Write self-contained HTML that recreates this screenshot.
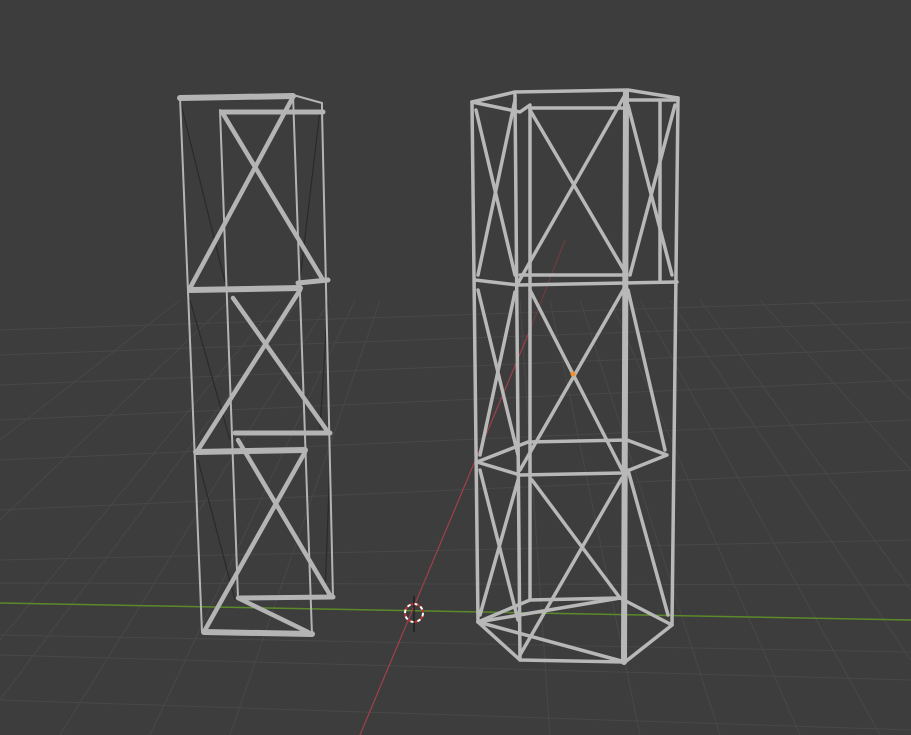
<!DOCTYPE html>
<html><head><style>html,body{margin:0;padding:0;background:#3d3d3d;width:911px;height:735px;overflow:hidden}</style></head>
<body>
<svg width="911" height="735" viewBox="0 0 911 735" xmlns="http://www.w3.org/2000/svg">
<rect width="911" height="735" fill="#3d3d3d"/>
<g stroke="#484848" stroke-width="1" fill="none">
<line x1="0" y1="330" x2="911" y2="300"/>
<line x1="0" y1="355" x2="911" y2="322"/>
<line x1="0" y1="385" x2="911" y2="348"/>
<line x1="0" y1="420" x2="911" y2="380"/>
<line x1="0" y1="460" x2="911" y2="420"/>
<line x1="0" y1="510" x2="911" y2="470"/>
<line x1="0" y1="560" x2="911" y2="540"/>
<line x1="0" y1="583" x2="911" y2="585"/>
<line x1="0" y1="635" x2="911" y2="652"/>
<line x1="0" y1="655" x2="911" y2="680"/>
<line x1="0" y1="700" x2="911" y2="730"/>
<line x1="60" y1="735" x2="330" y2="300"/>
<line x1="150" y1="735" x2="355" y2="300"/>
<line x1="230" y1="735" x2="380" y2="300"/>
<line x1="0" y1="700" x2="300" y2="300"/>
<line x1="0" y1="640" x2="280" y2="300"/>
<line x1="0" y1="520" x2="230" y2="300"/>
<line x1="0" y1="440" x2="180" y2="300"/>
<line x1="550" y1="735" x2="520" y2="300"/>
<line x1="640" y1="735" x2="550" y2="300"/>
<line x1="720" y1="735" x2="580" y2="300"/>
<line x1="800" y1="735" x2="610" y2="300"/>
<line x1="880" y1="735" x2="640" y2="300"/>
<line x1="911" y1="660" x2="670" y2="300"/>
<line x1="911" y1="590" x2="700" y2="300"/>
<line x1="911" y1="470" x2="760" y2="300"/>
<line x1="911" y1="400" x2="810" y2="300"/>
</g>
<line x1="0" y1="603" x2="911" y2="620" stroke="#5b8a2a" stroke-width="1.5"/>
<line x1="360" y1="735" x2="530" y2="330" stroke="#a0404a" stroke-width="1.2"/>
<line x1="530" y1="330" x2="565" y2="240" stroke="#7a3a40" stroke-width="1"/>
<circle cx="414" cy="613" r="9" fill="none" stroke="#fff" stroke-width="2" stroke-dasharray="4 3"/>
<circle cx="414" cy="613" r="9" fill="none" stroke="#c0302f" stroke-width="2" stroke-dasharray="3 4" stroke-dashoffset="3.5"/>
<line x1="414" y1="596" x2="414" y2="632" stroke="#111" stroke-width="1"/>
<g stroke="#2a2a2a" stroke-width="1.2" fill="none">
<line x1="180" y1="100" x2="225" y2="282"/><line x1="320" y1="110" x2="300" y2="280"/>
<line x1="190" y1="300" x2="230" y2="440"/><line x1="328" y1="300" x2="320" y2="430"/>
<line x1="198" y1="460" x2="235" y2="600"/><line x1="330" y1="460" x2="325" y2="595"/>
</g>
<g stroke="#b4b4b4" stroke-linecap="round" fill="none">
<g stroke-width="2">
<line x1="180" y1="97" x2="202" y2="632"/>
<line x1="293" y1="95" x2="312" y2="635"/>
<line x1="220" y1="110" x2="238" y2="598"/>
<line x1="322" y1="110" x2="333" y2="598"/>
<line x1="293" y1="95" x2="322" y2="103"/>
<line x1="322" y1="103" x2="322" y2="112"/>
</g>
<g stroke-width="5">
<line x1="222" y1="112" x2="323" y2="112"/>
<line x1="298" y1="283" x2="328" y2="280"/>
<line x1="235" y1="433" x2="330" y2="433"/>
<line x1="240" y1="598" x2="333" y2="597"/>
</g>
<g stroke-width="6">
<line x1="180" y1="98" x2="293" y2="96"/>
<line x1="190" y1="290" x2="300" y2="288"/>
<line x1="196" y1="452" x2="305" y2="450"/>
<line x1="204" y1="632" x2="312" y2="634"/>
</g>
<g stroke-width="4.5">
<line x1="190" y1="288" x2="293" y2="97"/>
<line x1="222" y1="112" x2="323" y2="280"/>
<line x1="198" y1="450" x2="300" y2="290"/>
<line x1="233" y1="298" x2="328" y2="432"/>
<line x1="205" y1="630" x2="305" y2="452"/>
<line x1="238" y1="440" x2="330" y2="595"/>
<line x1="238" y1="598" x2="308" y2="632"/>
</g>
</g>
<g stroke="#b8b8b8" stroke-linecap="round" stroke-linejoin="round" fill="none">
<g stroke-width="3.5">
<polyline points="472,102 515,92 628,90 678,98"/>
<polyline points="472,102 520,112 530,105"/>
<line x1="530" y1="108" x2="625" y2="108"/>
<line x1="625" y1="100" x2="678" y2="100"/>
<polyline points="475,280 518,285 625,283 677,282"/>
<line x1="520" y1="275" x2="625" y2="275"/>
<polyline points="477,462 528,442 627,440 667,455 622,473 520,475 477,462"/>
<polyline points="478,622 530,600 620,598 672,625 625,662 520,660 478,622"/>
<line x1="478" y1="622" x2="620" y2="598"/>
<line x1="478" y1="622" x2="625" y2="662"/>
</g>
<g stroke-width="3.5">
<line x1="472" y1="102" x2="478" y2="622"/>
<line x1="515" y1="95" x2="520" y2="660"/>
<line x1="530" y1="108" x2="530" y2="600"/>
<line x1="678" y1="98" x2="672" y2="625"/>
<line x1="660" y1="100" x2="660" y2="282"/>
</g>
<line x1="626" y1="92" x2="624" y2="662" stroke-width="6"/>
<g stroke-width="3.5">
<line x1="518" y1="283" x2="625" y2="95"/>
<line x1="530" y1="110" x2="625" y2="272"/>
<line x1="520" y1="470" x2="625" y2="287"/>
<line x1="530" y1="290" x2="622" y2="470"/>
<line x1="520" y1="655" x2="622" y2="478"/>
<line x1="532" y1="480" x2="620" y2="598"/>
<line x1="476" y1="110" x2="515" y2="275"/>
<line x1="515" y1="100" x2="478" y2="275"/>
<line x1="478" y1="290" x2="518" y2="455"/>
<line x1="515" y1="292" x2="480" y2="455"/>
<line x1="480" y1="470" x2="518" y2="620"/>
<line x1="518" y1="480" x2="480" y2="615"/>
<line x1="628" y1="105" x2="672" y2="275"/>
<line x1="675" y1="105" x2="630" y2="275"/>
<line x1="628" y1="290" x2="665" y2="450"/>
<line x1="628" y1="470" x2="668" y2="615"/>
</g>
</g>
<circle cx="573" cy="374" r="2.5" fill="#f0922a"/>
</svg>
</body></html>
